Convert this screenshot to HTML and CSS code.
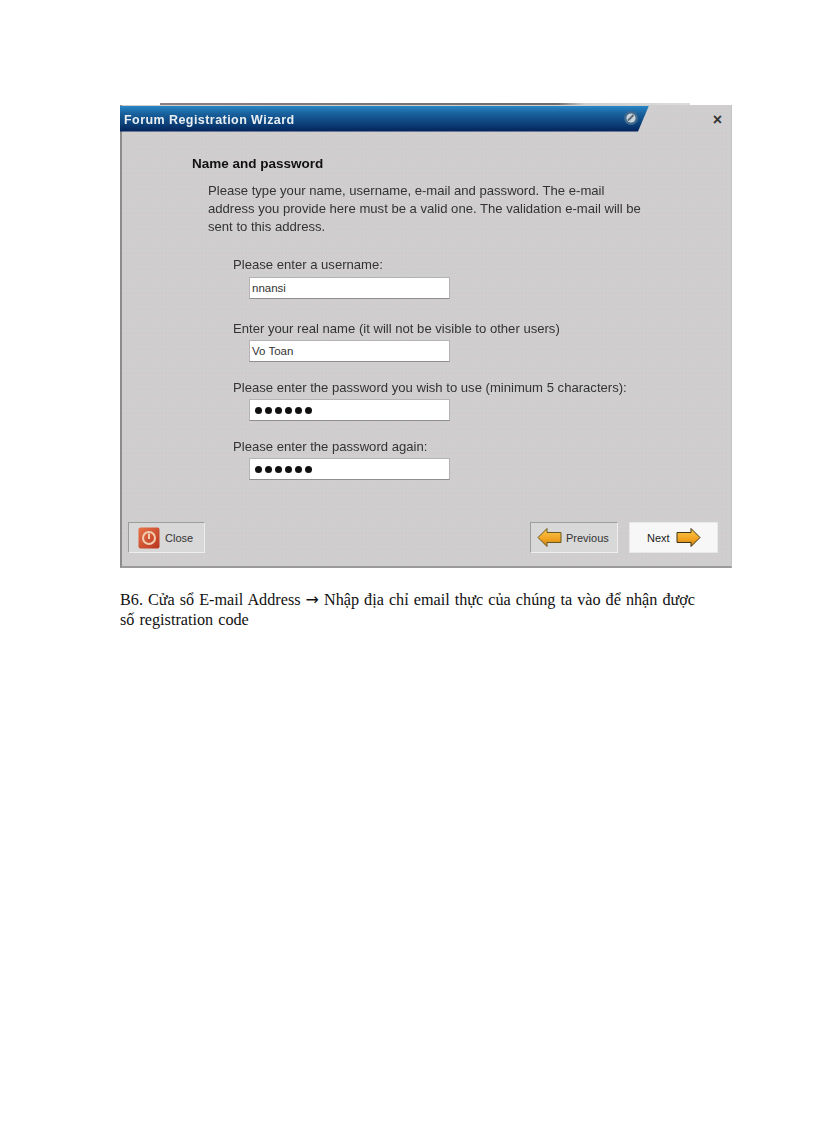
FILE: index.html
```html
<!DOCTYPE html>
<html lang="vi">
<head>
<meta charset="utf-8">
<title>Forum Registration Wizard</title>
<link rel="stylesheet" href="styles.css">
</head>
<body>
<main class="page">
  <section class="shot">
    <div class="topstrip"></div>
    <div class="window">
      <div class="titlerow">
        <div class="titlebar">
          <span class="titletext">Forum Registration Wizard</span>
          <svg class="orb" width="16" height="16" viewBox="0 0 16 16"><circle cx="8" cy="8" r="7" fill="#3f6a8e"/><circle cx="8" cy="8" r="4.6" fill="#c9d3da"/><path d="M5 10.5 L10.5 5" stroke="#5a6a78" stroke-width="2"/></svg>
        </div>
        <span class="x">×</span>
      </div>
      <div class="content">
        <h1 class="heading">Name and password</h1>
        <p class="intro">Please type your name, username, e-mail and password. The e-mail<br>address you provide here must be a valid one. The validation e-mail will be<br>sent to this address.</p>
        <div class="fields">
          <div class="field first">
            <div class="label">Please enter a username:</div>
            <div class="input">nnansi</div>
          </div>
          <div class="field">
            <div class="label">Enter your real name (it will not be visible to other users)</div>
            <div class="input">Vo Toan</div>
          </div>
          <div class="field">
            <div class="label">Please enter the password you wish to use (minimum 5 characters):</div>
            <div class="input dots"><i></i><i></i><i></i><i></i><i></i><i></i></div>
          </div>
          <div class="field">
            <div class="label">Please enter the password again:</div>
            <div class="input dots"><i></i><i></i><i></i><i></i><i></i><i></i></div>
          </div>
        </div>
      </div>
      <div class="buttons">
        <div class="btn close">
          <svg width="22" height="22" viewBox="0 0 22 22"><defs><linearGradient id="red" x1="0" y1="0" x2="1" y2="1"><stop offset="0" stop-color="#e8744a"/><stop offset="1" stop-color="#b8341e"/></linearGradient></defs><rect x="0.5" y="0.5" width="21" height="21" rx="2" fill="url(#red)"/><circle cx="11" cy="11" r="6" fill="none" stroke="#f1cdb0" stroke-width="2"/><path d="M11 6.5 V12" stroke="#f1cdb0" stroke-width="2"/></svg>
          <span>Close</span>
        </div>
        <div class="spacer"></div>
        <div class="btn prev">
          <svg width="25" height="21" viewBox="0 0 25 21"><defs><linearGradient id="amber" x1="0" y1="0" x2="0" y2="1"><stop offset="0" stop-color="#f8c850"/><stop offset="0.6" stop-color="#f2a31f"/><stop offset="1" stop-color="#b87a18"/></linearGradient></defs><path d="M1 10.5 L10 1.5 V5.5 H24 V15.5 H10 V19.5 Z" fill="url(#amber)" stroke="#6b5a20"/></svg>
          <span>Previous</span>
        </div>
        <div class="btn next">
          <span>Next</span>
          <svg width="25" height="21" viewBox="0 0 25 21"><path d="M24 10.5 L15 1.5 V5.5 H1 V15.5 H15 V19.5 Z" fill="url(#amber)" stroke="#3f3616"/></svg>
        </div>
      </div>
    </div>
  </section>
  <p class="caption">B6. Cửa sổ E-mail Address <span class="arrow">→</span> Nhập địa chỉ email thực của chúng ta vào để nhận được<br>số registration code</p>
</main>
</body>
</html>
```
FILE: styles.css
```css
* { box-sizing: border-box; }
html, body { margin: 0; padding: 0; background: #fff; }
.page { padding: 103px 84px 0 120px; width: 816px; height: 1123px; overflow: hidden; }
.shot { width: 612px; }
.topstrip { height: 2px; margin: 0 42px 0 40px; background: linear-gradient(90deg,#8a8080,#6e6a6a 75%,#cfcfcf 80%,#ddd); }
.window {
  height: 463px;
  background-color: #cecece;
  background-image:
    radial-gradient(circle, rgba(216,202,208,.6) 0.7px, transparent 1px),
    radial-gradient(circle, rgba(192,208,196,.7) 0.7px, transparent 1px);
  background-size: 4px 4px, 5px 5px;
  background-position: 0 0, 2px 1px;
  border-left: 2px solid #8c8c8c;
  border-right: 1px solid #c4c4c4;
  border-bottom: 2px solid #9a9a9a;
  display: flex;
  flex-direction: column;
  font-family: "Liberation Sans", sans-serif;
  font-size: 13.1px;
  color: #333;
}
.titlerow { display: flex; align-items: center; height: 27px; margin-left: -2px; }
.titlebar { width: 529px; height: 26px; display: flex; align-items: center; justify-content: space-between; padding: 3px 10px 0 4px; background: linear-gradient(180deg,#2a86c4 0%,#17609c 30%,#0c3f78 70%,#04205a 100%); clip-path: polygon(0 0,100% 0,calc(100% - 11px) 100%,0 100%); }
.orb { margin-top: -4px; }
.titletext { color: #e8eef2; font-weight: bold; font-size: 12.5px; letter-spacing: .44px; filter: blur(.3px); }
.x { margin-left: auto; margin-right: 9px; margin-top: 3px; font-weight: bold; font-size: 16px; color: #333; line-height: 1; }
.content { flex: 1; padding: 24px 0 0 70px; }
.heading { margin: 0; font-size: 13.5px; font-weight: bold; color: #111; line-height: 16px; filter: blur(.3px); }
.intro { margin: 10px 0 0 16px; line-height: 17.8px; white-space: nowrap; filter: blur(.35px); }
.fields { margin: 22px 0 0 41px; display: flex; flex-direction: column; gap: 12px; }
.field { display: flex; flex-direction: column; height: 47px; }
.first { margin-bottom: 5px; }
.label { line-height: 16px; white-space: nowrap; filter: blur(.35px); }
.input { margin: 3px 0 0 16px; width: 201px; height: 22px; background: #fff; border: 1px solid #b4b4b4; border-bottom-color: #8e8e8e; padding: 0 2px; font-size: 11.5px; line-height: 20px; color: #333; }
.first .input { margin-top: 4px; }
.dots { display: flex; align-items: center; gap: 3px; padding-left: 5px; }
.dots i { width: 7px; height: 7px; border-radius: 50%; background: #111; }
.buttons { display: flex; align-items: center; gap: 11px; padding: 0 13px 13px 6px; font-size: 11px; }
.spacer { flex: 1; }
.btn { height: 31px; display: flex; align-items: center; background: #d8d8d8; border: 1px solid #9d9d9d; border-right-color: #eee; border-bottom-color: #eee; }
.close { width: 77px; gap: 5px; padding-left: 9px; }
.prev { width: 88px; gap: 4px; padding-left: 6px; }
.next { width: 89px; gap: 6px; padding-left: 17px; background: #f7f7f7; border-color: #e8e8e8; color: #222; }
.caption { margin: 22px 0 0 0; font-family: "Liberation Serif", serif; font-size: 16.2px; line-height: 20px; color: #111; white-space: nowrap; word-spacing: 1px; }
.arrow { font-family: "DejaVu Sans", sans-serif; font-size: 16px; line-height: 1; }
```
